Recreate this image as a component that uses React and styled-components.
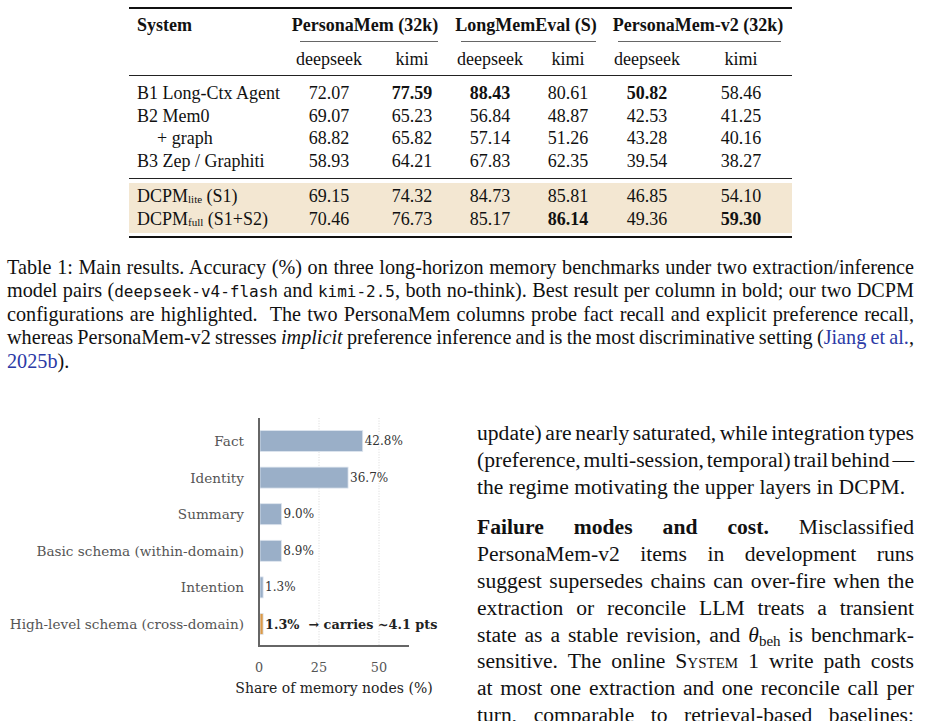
import styled, { createGlobalStyle } from "styled-components";

const GlobalStyle = createGlobalStyle`
    body {
        margin: 0;
        background: #fff;
    }
`

const Page = styled.div`
    width: 925px;
    height: 721px;
    overflow: hidden;
    color: #111;
    font-family: "Liberation Serif", "Times New Roman", serif;
`

const TableArea = styled.div`
    padding: 7px 0 0 129px;
`

const Table = styled.div`
    width: 663px;
    border-top: 2px solid #111;
    border-bottom: 2px solid #111;
    font-size: 18px;
`

const COLS = '153px 94px 72px 84px 72px 86px 102px';

const HeadRow = styled.div`
    display: grid;
    grid-template-columns: ${COLS};
    height: 34px;
    align-items: start;
    padding-top: 6px;
    box-sizing: border-box;
`

const SubRow = styled.div`
    display: grid;
    grid-template-columns: ${COLS};
    height: 33px;
    align-items: center;
    border-bottom: 1px solid #222;
    box-sizing: border-box;
`

const Body = styled.div`
    padding: 6px 0;
    border-bottom: 1px solid #222;
`

const Highlight = styled.div`
    margin: 4px 0 3px 0;
    padding: 2px 0;
    background: #f3e7d2;
`

const Row = styled.div`
    display: grid;
    grid-template-columns: ${COLS};
    height: 22.6px;
    line-height: 22.6px;
`

const NameCell = styled.div`
    padding-left: ${(props) => props.$indent ? 28 : 8}px;
    font-weight: ${(props) => props.$bold ? 700 : 400};
    white-space: nowrap;
`

const Cell = styled.div`
    text-align: center;
    font-weight: ${(props) => props.$bold ? 700 : 400};
`

const GroupHead = styled.div`
    grid-column: span 2;
    display: flex;
    flex-direction: column;
    align-items: stretch;
    font-weight: 700;
    text-align: center;
    white-space: nowrap;
`

const GroupRule = styled.div`
    height: 1px;
    margin: 5px ${(props) => props.$trim[1]}px 0 ${(props) => props.$trim[0]}px;
    background: #666;
`

const Sub = styled.sub`
    font-size: 11px;
    line-height: 0;
    vertical-align: -1px;
`

const Caption = styled.div`
    margin-top: 18px;
    padding: 0 11px 0 7px;
    font-size: 20.2px;
    line-height: 23.3px;
`

const CapLine = styled.div`
    text-align: justify;
    text-align-last: ${(props) => props.$last ? 'left' : 'justify'};
    word-spacing: ${(props) => props.$last ? 0 : -2}px;
    white-space: nowrap;
`

const Mono = styled.span`
    font-family: "DejaVu Sans Mono", "Liberation Mono", monospace;
    font-size: 16px;
    word-spacing: 0;
`

const Cite = styled.span`
    color: #2b3aa6;
`

const Lower = styled.div`
    display: flex;
    margin-top: 27px;
`

const ChartBox = styled.div`
    width: 477px;
    flex: none;
`

const TextCol = styled.div`
    width: 437px;
    padding-top: 20px;
    font-size: 21.6px;
    line-height: 26.8px;
`

const Para = styled.div`
    margin-bottom: 14px;
`

const TextLine = styled.div`
    text-align: justify;
    text-align-last: ${(props) => props.$last ? 'left' : 'justify'};
    word-spacing: ${(props) => props.$last ? 0 : -3}px;
    white-space: nowrap;
`

const Caps = styled.span`
    font-variant: small-caps;
`

const BehSub = styled.sub`
    font-size: 15px;
    font-style: normal;
    vertical-align: -4px;
    line-height: 0;
`

const ChartText = styled.text`
    font-family: "DejaVu Serif", serif;
    font-size: ${(props) => props.$size}px;
    font-weight: ${(props) => props.$bold ? 700 : 400};
    fill: ${(props) => props.$color};
    white-space: pre;
    dominant-baseline: central;
`

const groups = [
    { title: 'PersonaMem (32k)', trim: [18, 10] },
    { title: 'LongMemEval (S)', trim: [13, 8] },
    { title: 'PersonaMem-v2 (32k)', trim: [14, 11] },
];

const baselines = [
    { name: 'B1 Long-Ctx Agent', v: ['72.07', '77.59', '88.43', '80.61', '50.82', '58.46'], bold: [1, 2, 4] },
    { name: 'B2 Mem0', v: ['69.07', '65.23', '56.84', '48.87', '42.53', '41.25'], bold: [] },
    { name: '+ graph', v: ['68.82', '65.82', '57.14', '51.26', '43.28', '40.16'], bold: [], indent: true },
    { name: 'B3 Zep / Graphiti', v: ['58.93', '64.21', '67.83', '62.35', '39.54', '38.27'], bold: [] },
];

const ours = [
    { sub: 'lite', tail: ' (S1)', v: ['69.15', '74.32', '84.73', '85.81', '46.85', '54.10'], bold: [] },
    { sub: 'full', tail: ' (S1+S2)', v: ['70.46', '76.73', '85.17', '86.14', '49.36', '59.30'], bold: [3, 5] },
];

const bars = [
    { label: 'Fact', value: 42.8 },
    { label: 'Identity', value: 36.7 },
    { label: 'Summary', value: 9.0 },
    { label: 'Basic schema (within-domain)', value: 8.9 },
    { label: 'Intention', value: 1.3 },
    { label: 'High-level schema (cross-domain)', value: 1.3, accent: true },
];

const ValueCells = ({ v, bold }) => v.map((x, i) => <Cell key={i} $bold={bold.includes(i)}>{x}</Cell>);

const ResultsTable = () => (
    <Table>
        <HeadRow>
            <NameCell $bold>System</NameCell>
            {groups.map(g => (
                <GroupHead key={g.title}>
                    <span>{g.title}</span>
                    <GroupRule $trim={g.trim} />
                </GroupHead>
            ))}
        </HeadRow>
        <SubRow>
            <div />
            {['deepseek', 'kimi', 'deepseek', 'kimi', 'deepseek', 'kimi'].map((m, i) => <Cell key={i}>{m}</Cell>)}
        </SubRow>
        <Body>
            {baselines.map(r => (
                <Row key={r.name}>
                    <NameCell $indent={r.indent}>{r.name}</NameCell>
                    <ValueCells v={r.v} bold={r.bold} />
                </Row>
            ))}
        </Body>
        <Highlight>
            {ours.map(r => (
                <Row key={r.sub}>
                    <NameCell>DCPM<Sub>{r.sub}</Sub>{r.tail}</NameCell>
                    <ValueCells v={r.v} bold={r.bold} />
                </Row>
            ))}
        </Highlight>
    </Table>
);

// chart coords: x in page px, y relative to the chart box top (page y ~400)
const X0 = 259;
const PX = 2.4;
const Y_TOP = 18;
const Y_AXIS = 246;

const NodeChart = () => (
    <svg width="477" height="310" viewBox="0 0 477 310">
        {[25, 50].map(t => (
            <line key={t} x1={X0 + t * PX} x2={X0 + t * PX} y1={Y_TOP} y2={Y_AXIS} stroke="#cfcfcf" strokeWidth="0.8" strokeDasharray="1 1.6" />
        ))}
        {bars.map((b, i) => {
            const cy = 41 + i * 36.6;
            const w = b.value * PX;
            return (
                <g key={b.label}>
                    <rect x={X0 + 1} y={cy - 10.5} width={w} height="21" fill={b.accent ? '#dc9a48' : '#9aafc8'} stroke="#dfe6ef" strokeWidth="0.8" />
                    <ChartText x="244" y={cy} textAnchor="end" $size={13.6} $color="#555">{b.label}</ChartText>
                    {b.accent ? (
                        <ChartText x={X0 + w + 3} y={cy} $size={12.8} $bold $color="#222">{`${b.value.toFixed(1)}%  \u2192 carries ~4.1 pts`}</ChartText>
                    ) : (
                        <ChartText x={X0 + w + 3} y={cy} $size={12} $color="#333">{`${b.value.toFixed(1)}%`}</ChartText>
                    )}
                </g>
            );
        })}
        <line x1={X0} x2={X0} y1={Y_TOP} y2={Y_AXIS + 1} stroke="#666" strokeWidth="2" />
        <line x1={X0 - 1} x2="409" y1={Y_AXIS} y2={Y_AXIS} stroke="#666" strokeWidth="2" />
        {[0, 25, 50].map(t => (
            <ChartText key={t} x={X0 + t * PX} y="267" textAnchor="middle" $size={12.8} $color="#555">{t}</ChartText>
        ))}
        <ChartText x="334" y="288" textAnchor="middle" $size={14} $color="#222">Share of memory nodes (%)</ChartText>
    </svg>
);

const App = () => (
    <Page>
        <GlobalStyle />
        <TableArea>
            <ResultsTable />
        </TableArea>
        <Caption>
            <CapLine>Table 1: Main results. Accuracy (%) on three long-horizon memory benchmarks under two extraction/inference</CapLine>
            <CapLine>model pairs (<Mono>deepseek-v4-flash</Mono> and <Mono>kimi-2.5</Mono>, both no-think). Best result per column in bold; our two DCPM</CapLine>
            <CapLine>configurations are highlighted.&nbsp; The two PersonaMem columns probe fact recall and explicit preference recall,</CapLine>
            <CapLine>whereas PersonaMem-v2 stresses <i>implicit</i> preference inference and is the most discriminative setting (<Cite>Jiang et al.</Cite>,</CapLine>
            <CapLine $last><Cite>2025b</Cite>).</CapLine>
        </Caption>
        <Lower>
            <ChartBox>
                <NodeChart />
            </ChartBox>
            <TextCol>
                <Para>
                    <TextLine>update) are nearly saturated, while integration types</TextLine>
                    <TextLine>(preference, multi-session, temporal) trail behind —</TextLine>
                    <TextLine $last>the regime motivating the upper layers in DCPM.</TextLine>
                </Para>
                <Para>
                    <TextLine><b>Failure modes and cost.</b> Misclassified</TextLine>
                    <TextLine>PersonaMem-v2 items in development runs</TextLine>
                    <TextLine>suggest supersedes chains can over-fire when the</TextLine>
                    <TextLine>extraction or reconcile LLM treats a transient</TextLine>
                    <TextLine>state as a stable revision, and <i>θ</i><BehSub>beh</BehSub> is benchmark-</TextLine>
                    <TextLine>sensitive. The online <Caps>System</Caps> 1 write path costs</TextLine>
                    <TextLine>at most one extraction and one reconcile call per</TextLine>
                    <TextLine>turn, comparable to retrieval-based baselines;</TextLine>
                </Para>
            </TextCol>
        </Lower>
    </Page>
);

export default App;
